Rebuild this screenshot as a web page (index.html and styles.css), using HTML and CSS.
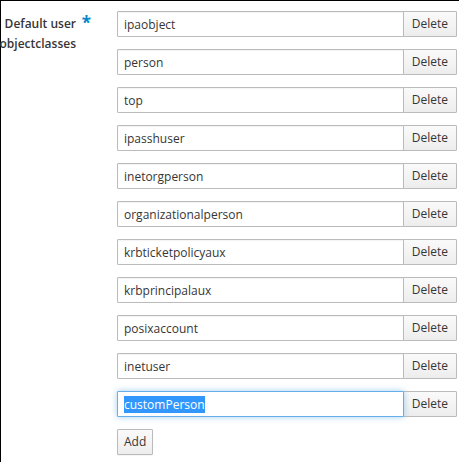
FILE: index.html
```html
<!DOCTYPE html>
<html>
<head>
<meta charset="utf-8">
<link rel="stylesheet" href="styles.css">
</head>
<body>
<div class="frame">
  <div class="form-row">
    <label class="label">Default user objectclasses<span class="req">*</span></label>
    <div class="field">
      <div class="multi">
        <div class="item"><input class="control" value="ipaobject"><button class="btn del">Delete</button></div>
        <div class="item"><input class="control" value="person"><button class="btn del">Delete</button></div>
        <div class="item"><input class="control" value="top"><button class="btn del">Delete</button></div>
        <div class="item"><input class="control" value="ipasshuser"><button class="btn del">Delete</button></div>
        <div class="item"><input class="control" value="inetorgperson"><button class="btn del">Delete</button></div>
        <div class="item"><input class="control" value="organizationalperson"><button class="btn del">Delete</button></div>
        <div class="item"><input class="control" value="krbticketpolicyaux"><button class="btn del">Delete</button></div>
        <div class="item"><input class="control" value="krbprincipalaux"><button class="btn del">Delete</button></div>
        <div class="item"><input class="control" value="posixaccount"><button class="btn del">Delete</button></div>
        <div class="item"><input class="control" value="inetuser"><button class="btn del">Delete</button></div>
        <div class="item"><input class="control focused" id="last" value="customPerson"><button class="btn del">Delete</button></div>
      </div>
      <button class="btn add">Add</button>
    </div>
  </div>
</div>
<script src="script.js"></script>
</body>
</html>
```
FILE: styles.css
```css
html, body {
  margin: 0;
  padding: 0;
  background: #fff;
}
body {
  width: 459px;
  height: 463px;
  overflow: hidden;
  font-family: "Open Sans", "Liberation Sans", sans-serif;
  font-size: 12px;
  line-height: 20px;
  color: #363636;
}
.frame {
  border-top: 1px solid #000;
  border-left: 1px solid #000;
  height: 462px;
  box-sizing: border-box;
}
.form-row {
  display: flex;
  align-items: flex-start;
  padding-top: 10px;
}
.label {
  position: relative;
  width: 77px;
  flex: none;
  text-align: right;
  font-weight: 600;
  padding-top: 3px;
  margin-left: -2px;
  margin-right: 41px;
}
.req {
  position: absolute;
  right: -15px;
  top: 2px;
  color: #0088ce;
  font-size: 17px;
  font-weight: 700;
}
.field {
  width: 340px;
  flex: none;
}
.multi {
  display: flex;
  flex-direction: column;
  gap: 12px;
}
.item {
  display: flex;
  height: 26px;
}
.control {
  flex: 1;
  min-width: 0;
  height: 26px;
  box-sizing: border-box;
  border: 1px solid #bbb;
  padding: 0 6px;
  margin: 0;
  font: inherit;
  color: #363636;
  background: #fff;
  outline: none;
  border-radius: 1px 0 0 1px;
  box-shadow: inset 0 1px 1px rgba(3, 3, 3, 0.05);
}
.control.focused {
  border-color: #66afe9;
  box-shadow: 0 0 6px rgba(102, 175, 233, 0.6);
  position: relative;
  z-index: 1;
}
.control::selection {
  background: #3297fd;
  color: #fff;
}
.btn {
  height: 26px;
  box-sizing: border-box;
  border: 1px solid #bbb;
  background-color: #f1f1f1;
  background-image: linear-gradient(to bottom, #fafafa 0, #ededed 100%);
  color: #363636;
  font: inherit;
  margin: 0;
  cursor: pointer;
  border-radius: 1px;
}
.del {
  padding: 0 8px;
  margin-left: -1px;
  border-radius: 0 1px 1px 0;
}
.add {
  display: block;
  margin-top: 12px;
  padding: 0 6px;
  box-shadow: 0 1px 1px rgba(3, 3, 3, 0.05);
}
```
FILE: script.js
```js
var el = document.getElementById('last');
el.focus();
el.select();
```
